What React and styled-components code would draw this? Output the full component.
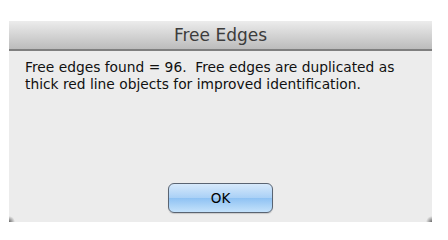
import React from "react";
import styled, { createGlobalStyle } from "styled-components";

const Global = createGlobalStyle`
  html, body {
    margin: 0;
    padding: 0;
    background: #ffffff;
  }
`;

const Page = styled.div`
  width: 448px;
  height: 240px;
  padding: 21px 0 0 9px;
  box-sizing: border-box;
`;

const Window = styled.div`
  position: relative;
  width: 423px;
  height: 201px;
  background: #ececec;
  display: flex;
  flex-direction: column;
  font-family: "DejaVu Sans", "Liberation Sans", sans-serif;
`;

const TitleBar = styled.div`
  height: 28px;
  display: flex;
  align-items: center;
  justify-content: center;
  background: linear-gradient(#ececec, #d4d4d4 50%, #bcbcbc);
  border-bottom: 2px solid #7f7f7f;
  font-size: 17px;
  color: #3c3c3c;
`;

const Body = styled.div`
  flex: 1;
  display: flex;
  flex-direction: column;
  padding: 8px 16px 9px 16px;
`;

const Message = styled.p`
  margin: 0;
  font-size: 13.8px;
  line-height: 17px;
  color: #111;
  white-space: pre-wrap;
`;

const ButtonRow = styled.div`
  margin-top: auto;
  display: flex;
  justify-content: center;
`;

const Button = styled.button`
  width: 105px;
  height: 30px;
  border: 1px solid #5a6472;
  border-radius: 6px;
  background: linear-gradient(#d7e9fb, #a9d0f6 50%, #8fc2f3 51%, #c4e2fb);
  font-family: "DejaVu Sans", "Liberation Sans", sans-serif;
  font-size: 13.5px;
  color: #000;
  box-shadow: 0 1px 1px rgba(0, 0, 0, 0.15);
`;

const Corner = styled.div`
  position: absolute;
  bottom: 0;
  ${(p) => (p.side === "left" ? "left: 0;" : "right: 0;")}
  width: 6px;
  height: 6px;
  background: radial-gradient(
    circle at ${(p) => (p.side === "left" ? "0% 100%" : "100% 100%")},
    #666 0,
    rgba(120, 120, 120, 0) 6px
  );
`;

export default function App() {
  return (
    <Page>
      <Global />
      <Window>
        <TitleBar>Free Edges</TitleBar>
        <Body>
          <Message>
            {"Free edges found = 96.  Free edges are duplicated as\nthick red line objects for improved identification."}
          </Message>
          <ButtonRow>
            <Button>OK</Button>
          </ButtonRow>
        </Body>
        <Corner side="left" />
        <Corner side="right" />
      </Window>
    </Page>
  );
}
